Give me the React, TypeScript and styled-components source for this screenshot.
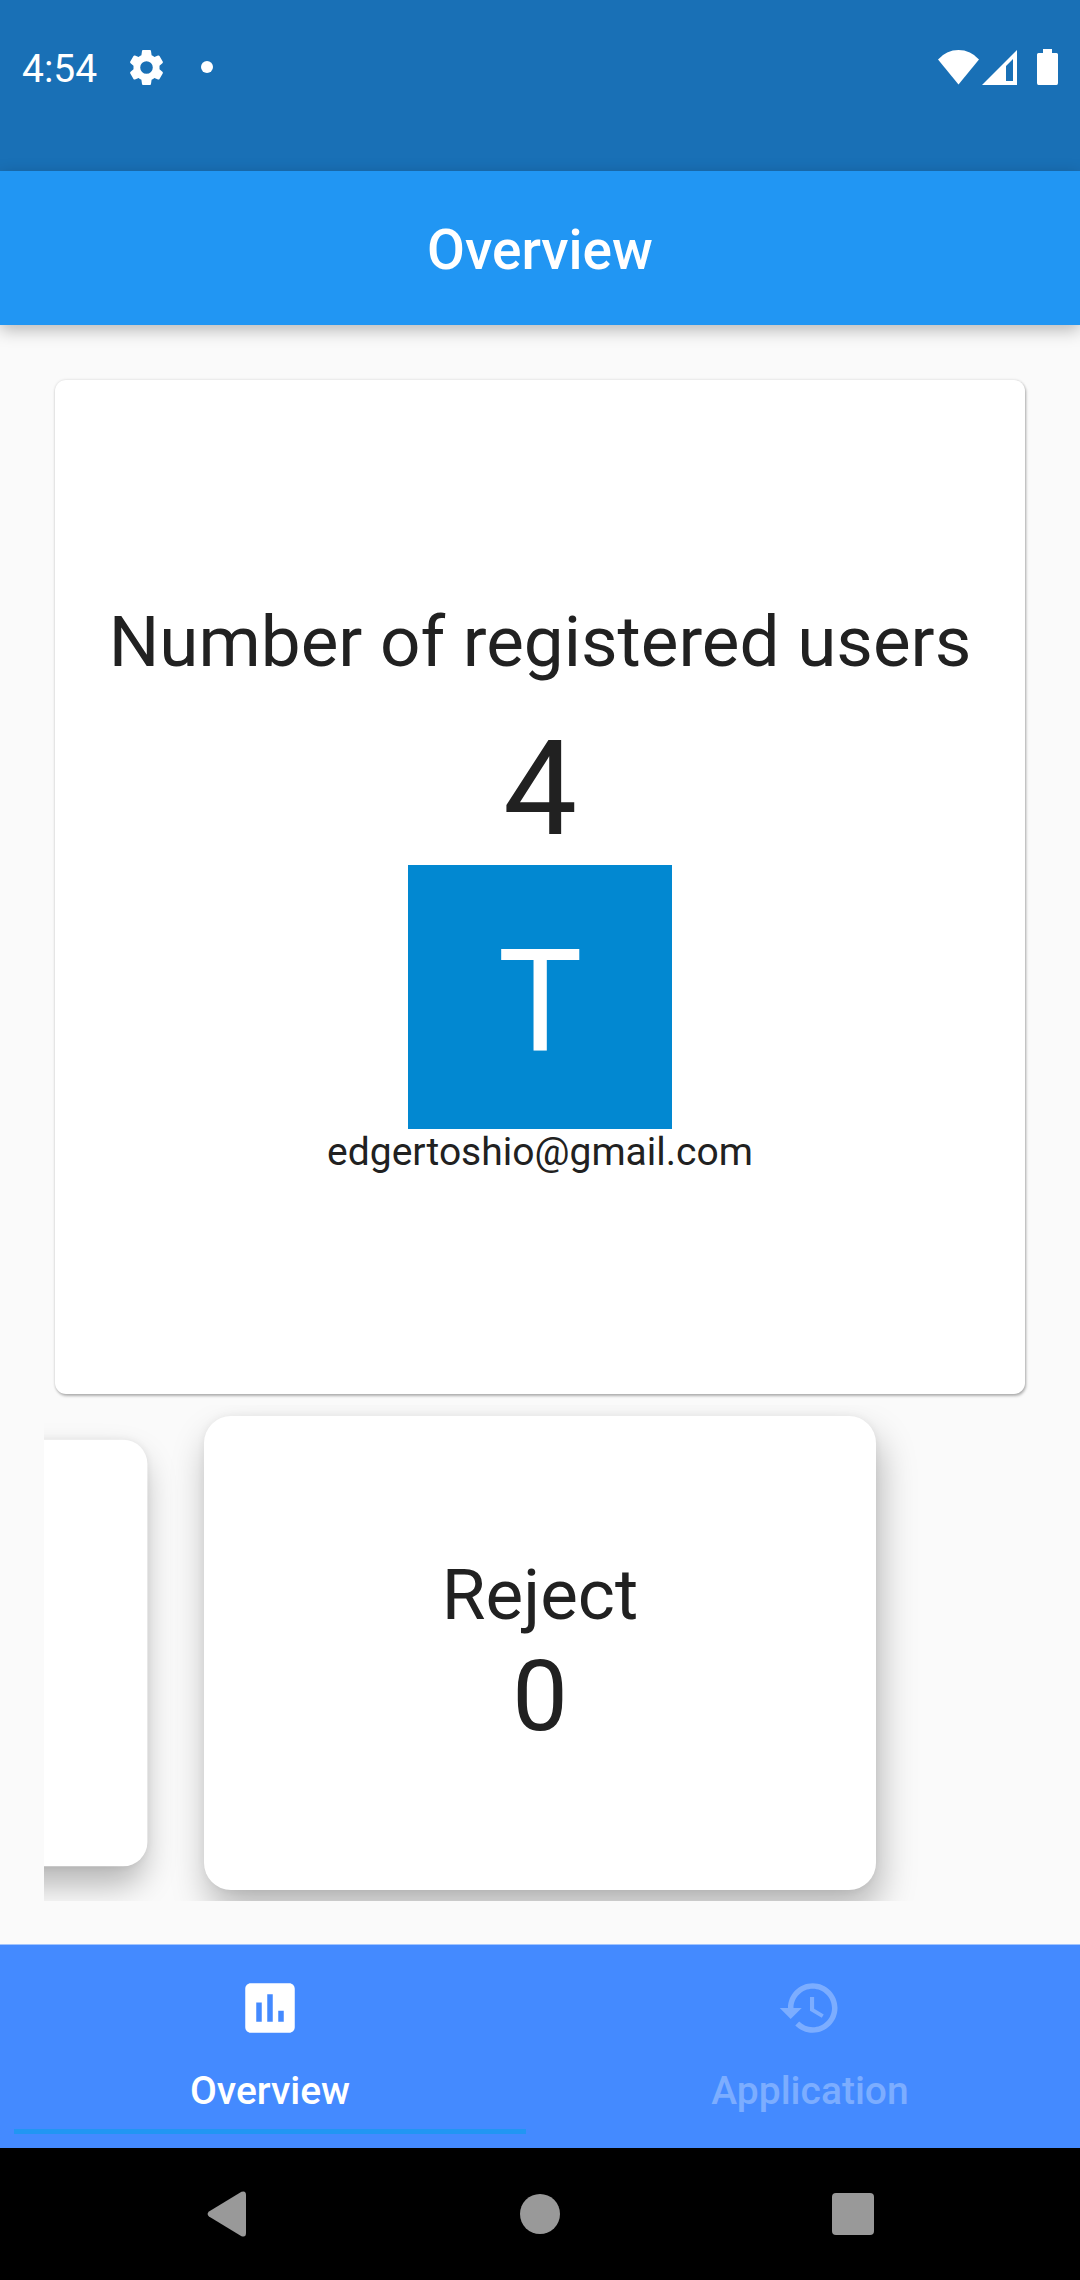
import React, { useState } from "react";
import styled, { createGlobalStyle } from "styled-components";

const GlobalStyle = createGlobalStyle`
  *, *::before, *::after { box-sizing: border-box; }
  body {
    margin: 0;
    background: #fafafa;
    color: #212121;
    font-family: Roboto, "Noto Sans", "Liberation Sans", sans-serif;
  }
  h1, h2, p { margin: 0; font-weight: 400; }
  button { font: inherit; border: 0; padding: 0; background: none; cursor: pointer; }
  svg { display: block; }
`;

const Screen = styled.div`
  display: flex;
  flex-direction: column;
  min-height: 100vh;
`;

const StatusBar = styled.div`
  display: flex;
  align-items: flex-start;
  justify-content: space-between;
  height: 171px;
  padding: 43px 22px 0;
  background: #1970b6;
  color: #fff;
`;

const StatusGroup = styled.div<{ $gap: number }>`
  display: flex;
  align-items: center;
  gap: ${(p) => p.$gap}px;
  height: 48px;
`;

const Clock = styled.span`
  font-size: 39px;
  line-height: 48px;
  padding-top: 4px;
`;

const Notices = styled.span`
  display: flex;
  align-items: center;
  gap: 38px;
`;

const NoticeDot = styled.span`
  width: 12px;
  height: 12px;
  border-radius: 50%;
  background: #fff;
`;

const SignalPair = styled.span`
  display: flex;
  gap: 3px;
`;

const AppBar = styled.header`
  display: flex;
  align-items: center;
  justify-content: center;
  height: 154px;
  padding-top: 4px;
  background: #2196f3;
  box-shadow: 0 5px 16px rgba(0, 0, 0, 0.27);
`;

const Title = styled.h1`
  color: #fff;
  font-size: 55px;
  font-weight: 500;
  line-height: 64px;
`;

const Content = styled.main`
  flex: 1;
  display: flex;
  flex-direction: column;
  padding: 44px 44px 43px;
`;

const UsersCard = styled.section`
  flex: 1;
  display: flex;
  flex-direction: column;
  align-items: center;
  justify-content: center;
  margin: 11px;
  padding: 22px;
  border-radius: 11px;
  background: #fff;
  text-align: center;
  box-shadow: 1px 2px 3px rgba(0, 0, 0, 0.28), 0 0 3px rgba(0, 0, 0, 0.14);
`;

const Heading = styled.h2<{ $line: number }>`
  font-size: 71px;
  line-height: ${(p) => p.$line}px;
`;

const UserCount = styled.p`
  margin-top: 28px;
  font-size: 132px;
  line-height: 152px;
`;

const Avatar = styled.div`
  display: flex;
  align-items: center;
  justify-content: center;
  width: 264px;
  height: 264px;
  padding-top: 11px;
  background: #0288d1;
  color: #fff;
  font-size: 142px;
  line-height: 166px;
`;

const Email = styled.p`
  font-size: 39px;
  line-height: 46px;
`;

const Carousel = styled.section`
  display: flex;
  justify-content: center;
  height: 496px;
  overflow: hidden;

  /* empty page after the last card keeps it centred */
  &::after {
    content: "";
    flex: 0 0 70%;
  }
`;

const Page = styled.div<{ $resting?: boolean }>`
  flex: 0 0 70%;
  display: flex;
  padding: 11px;
  transform: ${(p) => (p.$resting ? "scale(0.9)" : "none")};
`;

const PageCard = styled.div<{ $shift: number }>`
  flex: 1;
  display: flex;
  flex-direction: column;
  align-items: center;
  justify-content: center;
  border-radius: 27px;
  background: #fff;
  box-shadow: ${(p) => p.$shift}px 20px 36px rgba(0, 0, 0, 0.28),
    0 0 8px rgba(0, 0, 0, 0.06);
`;

const PageCount = styled.p`
  font-size: 99px;
  line-height: 116px;
`;

const Tabs = styled.nav`
  display: flex;
  border-top: 1px solid #a2c4fd;
  background: #448aff;
`;

const Tab = styled.button<{ $active: boolean }>`
  flex: 1;
  display: flex;
  flex-direction: column;
  align-items: center;
  gap: 27px;
  margin: 0 14px 14px;
  padding: 30px 0 15px;
  border-bottom: 5px solid ${(p) => (p.$active ? "#2196f3" : "transparent")};
  color: ${(p) => (p.$active ? "#fff" : "#7cadff")};
`;

const TabLabel = styled.span`
  font-size: 39px;
  font-weight: 500;
  line-height: 46px;
`;

const SystemBar = styled.div`
  display: grid;
  grid-template-columns: repeat(3, 1fr);
  height: 132px;
  padding: 0 71px;
  background: #000;
`;

const SystemButton = styled.button`
  display: flex;
  align-items: center;
  justify-content: center;
  color: #999;
`;

const GearIcon = () => (
  <svg width="33" height="35" viewBox="0 0 33 35" fill="currentColor" aria-hidden="true">
    <path
      fillRule="evenodd"
      d="M13 0H20Q20.900 0 21 1L21.600 5.300Q23.200 6 24.400 7L28 5.500Q29 5.100 29.500 6L32.700 11.600Q33.200 12.500 32.400 13.200L29.500 15.700V19.300L32.400 21.800Q33.200 22.500 32.700 23.400L29.500 29Q29 29.900 28 29.500L24.400 28Q23.200 29 21.600 29.700L21 34Q20.900 35 20 35H13Q12.100 35 12 34L11.400 29.700Q9.800 29 8.600 28L5 29.500Q4 29.900 3.500 29L.3 23.400Q-.2 22.500 .6 21.800L3.500 19.300V15.700L.6 13.200Q-.2 12.500 .3 11.600L3.500 6Q4 5.100 5 5.500L8.600 7Q9.800 6 11.400 5.300L12 1Q12.100 0 13 0ZM16.500 11.200a6.300 6.300 0 1 0 0 12.600a6.300 6.300 0 1 0 0-12.600Z"
    />
  </svg>
);

const WifiIcon = () => (
  <svg width="41" height="35" viewBox="0 0 41 35" fill="currentColor" aria-hidden="true">
    <path d="M0 9.500A27 27 0 0 1 41 9.500L20.500 34.500Z" />
  </svg>
);

const CellIcon = () => (
  <svg width="35" height="35" viewBox="0 0 35 35" fill="currentColor" aria-hidden="true">
    <path fillRule="evenodd" d="M0 35L35 0V35ZM24 16V31H31V9Z" />
  </svg>
);

const BatteryIcon = () => (
  <svg width="21" height="36" viewBox="0 0 21 36" fill="currentColor" aria-hidden="true">
    <path d="M6 0H15V4H19.500Q21 4 21 5.500V34Q21 36 19.500 36H1.500Q0 36 0 34V5.500Q0 4 1.500 4H6Z" />
  </svg>
);

const ChartIcon = () => (
  <svg width="66" height="66" viewBox="0 0 24 24" fill="currentColor" aria-hidden="true">
    <path d="M19 3H5c-1.100 0-2 .9-2 2v14c0 1.100.9 2 2 2h14c1.100 0 2-.9 2-2V5c0-1.100-.9-2-2-2zM9 17H7v-7h2v7zm4 0h-2V7h2v10zm4 0h-2v-4h2v4z" />
  </svg>
);

const HistoryIcon = () => (
  <svg width="66" height="66" viewBox="0 0 24 24" fill="currentColor" aria-hidden="true">
    <path d="M13 3c-4.970 0-9 4.030-9 9H1l3.890 3.890.07.14L9 12H6c0-3.870 3.130-7 7-7s7 3.130 7 7-3.130 7-7 7c-1.930 0-3.680-.79-4.940-2.060l-1.420 1.420C8.270 19.990 10.510 21 13 21c4.970 0 9-4.030 9-9s-4.030-9-9-9zm-1 5v5l4.280 2.540.72-1.210-3.500-2.080V8H12z" />
  </svg>
);

const BackIcon = () => (
  <svg width="40" height="46" viewBox="0 0 40 46" fill="currentColor" aria-hidden="true">
    <path d="M2 20.500L34.500 .8Q39 -.8 39 4V42Q39 46.800 34.500 45.200L2 25.500Q-.8 23 2 20.500Z" />
  </svg>
);

const HomeIcon = () => (
  <svg width="40" height="40" viewBox="0 0 40 40" fill="currentColor" aria-hidden="true">
    <circle cx="20" cy="20" r="20" />
  </svg>
);

const RecentsIcon = () => (
  <svg width="42" height="42" viewBox="0 0 42 42" fill="currentColor" aria-hidden="true">
    <rect width="42" height="42" rx="4" />
  </svg>
);

const tabs = [
  { label: "Overview", Icon: ChartIcon },
  { label: "Application", Icon: HistoryIcon },
];

export default function App() {
  const [active, setActive] = useState("Overview");

  return (
    <>
      <GlobalStyle />
      <Screen>
        <StatusBar>
          <StatusGroup $gap={33}>
            <Clock>4:54</Clock>
            <Notices>
              <GearIcon />
              <NoticeDot />
            </Notices>
          </StatusGroup>
          <StatusGroup $gap={20}>
            <SignalPair>
              <WifiIcon />
              <CellIcon />
            </SignalPair>
            <BatteryIcon />
          </StatusGroup>
        </StatusBar>

        <AppBar>
          <Title>Overview</Title>
        </AppBar>

        <Content>
          <UsersCard>
            <Heading $line={86}>Number of registered users</Heading>
            <UserCount>4</UserCount>
            <Avatar>T</Avatar>
            <Email>edgertoshio@gmail.com</Email>
          </UsersCard>

          <Carousel>
            <Page $resting aria-hidden="true">
              <PageCard $shift={-4} />
            </Page>
            <Page>
              <PageCard $shift={4}>
                <Heading $line={86}>Reject</Heading>
                <PageCount>0</PageCount>
              </PageCard>
            </Page>
          </Carousel>
        </Content>

        <Tabs>
          {tabs.map(({ label, Icon }) => (
            <Tab
              key={label}
              type="button"
              $active={active === label}
              aria-current={active === label ? "page" : undefined}
              onClick={() => setActive(label)}
            >
              <Icon />
              <TabLabel>{label}</TabLabel>
            </Tab>
          ))}
        </Tabs>

        <SystemBar>
          <SystemButton type="button" aria-label="Back">
            <BackIcon />
          </SystemButton>
          <SystemButton type="button" aria-label="Home">
            <HomeIcon />
          </SystemButton>
          <SystemButton type="button" aria-label="Recent apps">
            <RecentsIcon />
          </SystemButton>
        </SystemBar>
      </Screen>
    </>
  );
}
